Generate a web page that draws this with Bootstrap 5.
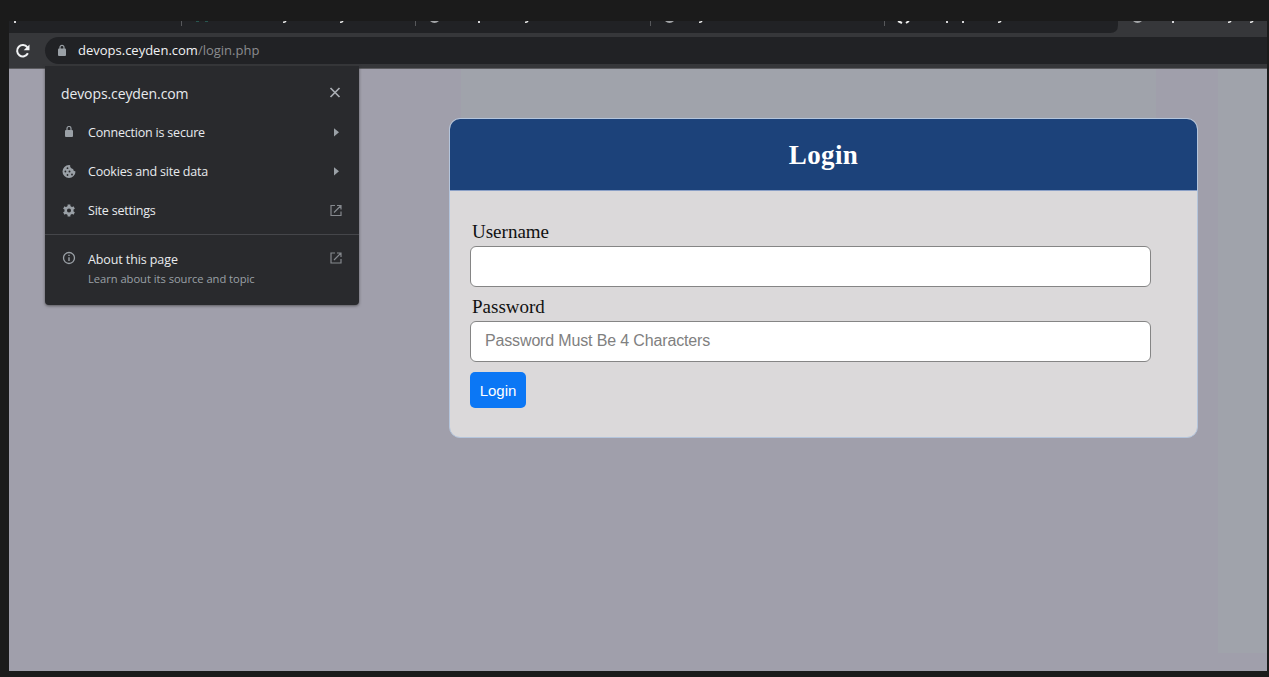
<!DOCTYPE html>
<html lang="en">
<head>
<meta charset="utf-8">
<meta name="viewport" content="width=device-width, initial-scale=1">
<title>Login</title>
<link href="https://cdn.jsdelivr.net/npm/bootstrap@5.3.0/dist/css/bootstrap.min.css" rel="stylesheet">
<style>
body{background:#1b1b1b;height:677px;padding:21px 2px 6px 9px;overflow:hidden;font-family:"Open Sans","Noto Sans",sans-serif}
.browser{height:650px;background:#a09fab}
.tabstrip{height:12px;background:#36373a}
.tabstrip svg{display:block}
.toolbar{height:36px;background:#36373a;padding:4px 0 4px 6px;border-bottom:1px solid #5c5c60}
.reload{width:16px;margin-right:14px}
.omnibox{height:27px;background:#212225;border-radius:14px 0 0 14px;padding-left:12px;font-size:13px;color:#8b8c8f}
.omnibox .url{margin-left:11px}
.omnibox b{font-weight:400;color:#f1f2f4}
.viewport{height:602px;padding:49px 0 0 440px;background:linear-gradient(#a0a3ab,#a0a3ab) 1209px 0/49px 584px no-repeat,linear-gradient(#a0a3ab,#a0a3ab) 452px 0/695px 49px no-repeat,#a09fab}
.siteinfo{left:36px;top:-3px;width:314px;height:239px;background:#292a2d;border-radius:0 0 4px 4px;box-shadow:0 1px 3px #333a;color:#e8eaed;padding-top:8px;z-index:2}
.siteinfo .line{height:39px;padding:0 16px;font-size:12.5px;letter-spacing:-.2px}
.siteinfo .line>span{padding-top:1px}
.siteinfo svg{flex:none;display:block}
.siteinfo .lead-ico{width:14px;margin-right:13px;margin-left:1px}
.siteinfo .lead-ico{margin-right:12px}
.siteinfo .site-line{padding-bottom:1px}
.site-name{font-size:14px;letter-spacing:-.1px}
.rule{height:1px;background:#45464a;margin-top:4px}
.about{padding:15px 16px 0}
.about-title{font-size:12.5px;line-height:19px;letter-spacing:-.1px}
.about-sub{font-size:11.2px;line-height:19px;color:#9aa0a6;letter-spacing:-.04px}
.login-card{width:749px;height:320px;background:#dbd9da;border:1px solid #b4c5dc;border-radius:11px;overflow:hidden}
.login-head{height:72px;background:#1c427a;border-bottom:1px solid #8ba0c6;color:#fff;font:bold 27px/72px "Liberation Serif",serif;letter-spacing:.4px}
.login-form{padding:31px 20px 0}
.login-form label{font:19px/20px "Liberation Serif",serif;color:#111;padding-left:2px;margin-bottom:4px;display:block}
.login-form .form-control{width:681px;height:42px;padding:0 14px 1px;border:1px solid #858585;border-radius:6px;font:16px "Liberation Sans",sans-serif;letter-spacing:-.15px;background:#fff;margin-bottom:10px}
.login-form .form-control{height:41px}
.login-form .form-control::placeholder{color:#808080;opacity:1}
.login-form .btn{width:56px;height:36px;padding:0;background:#0b77f5;border:0;border-radius:5px;font:15px "Liberation Sans",sans-serif;display:block}
</style>
</head>
<body>
<div class="browser d-flex flex-column">
  <div class="tabstrip">
    <svg width="1258" height="12" viewBox="0 0 1258 12" aria-hidden="true">
      <path d="M0 0H1109V4Q1109 12 1101 12H0Z" fill="#212225"/>
      <path d="M172.500 0V5M406.500 0V5M641.500 0V5M875.500 0V5" stroke="#57585b"/>
      <path d="M5 0h2v2h-2zM469 0h2v2h-2zM937 0h2v2h-2zM953 0h2v2h-2zM1163 0h2v2h-2z" fill="#d5d5d8"/>
      <path d="M274 1.300q2 0 3-1.300M331 1.300q2 0 3-1.300M516 1.300q2 0 3-1.300M690 1.300q2 0 3-1.300M989 1.300q2 0 3-1.300M1219 1.300q2 0 3-1.300M1241 1.300q2 0 3-1.300" stroke="#eee" stroke-width="1.500" fill="none"/>
      <path d="M421 0q4.500 4 9 0M656 0q4.500 4 9 0M1124 0q4.500 4 9 0" fill="#a4a6a9"/>
      <path d="M889 0l4 2M897 2l3-2" stroke="#eee" stroke-width="2"/>
      <path d="M187 .500h3M196 .500h3" stroke="#285650"/>
    </svg>
  </div>
  <div class="toolbar d-flex align-items-center">
    <svg class="reload" height="16" viewBox="0 0 16 16" fill="none" aria-hidden="true"><path d="M12.900 10.300A5.700 5.700 0 1 1 12.400 4.300" stroke="#f1f2f4" stroke-width="2"/><path d="M14.500 1.500V7.300H8.700Z" fill="#f1f2f4"/></svg>
    <div class="omnibox d-flex align-items-center flex-grow-1">
      <svg width="10" height="13" viewBox="0 0 10 13" aria-hidden="true"><rect x="1" y="4.500" width="8" height="7.500" rx="1" fill="#9aa0a6"/><path d="M3 5V3.300a2 2 0 0 1 4 0V5" fill="none" stroke="#9aa0a6" stroke-width="1.200"/></svg>
      <span class="url"><b>devops.ceyden.com</b>/login.php</span>
    </div>
  </div>
  <main class="viewport position-relative">
    <aside class="siteinfo position-absolute">
      <div class="line site-line d-flex align-items-center justify-content-between"><span class="site-name">devops.ceyden.com</span>
        <svg width="16" height="16" viewBox="0 0 16 16" aria-hidden="true"><path d="M3.500 3l9 9M12.500 3l-9 9" stroke="#a9adb2" stroke-width="1.700"/></svg></div>
      <div class="line d-flex align-items-center">
        <svg class="lead-ico" height="14" viewBox="0 1 14 14" aria-hidden="true"><rect x="3" y="5" width="8" height="7" rx="1" fill="#9aa0a6"/><path d="M5 5.500V3.500a2 2 0 0 1 4 0V5.500" fill="none" stroke="#9aa0a6" stroke-width="1.200"/></svg>
        <span class="flex-grow-1">Connection is secure</span><svg width="14" height="14" viewBox="0 1 14 14" aria-hidden="true"><path d="M5 3.200L10 7.300 5 11.400Z" fill="#9aa0a6"/></svg></div>
      <div class="line d-flex align-items-center">
        <svg class="lead-ico" height="14" viewBox="0 .5 14 14" aria-hidden="true"><path d="M7 .500a6.500 6.500 0 1 0 6.500 6.500 2.600 2.600 0 0 1-2.400-2.600A2.900 2.900 0 0 1 8.200 .800Z" fill="#9aa0a6"/><g fill="#292a2d"><circle cx="5.500" cy="3.700" r=".9"/><circle cx="3.400" cy="7" r=".9"/><circle cx="7.500" cy="7" r="1"/><circle cx="5.500" cy="10.500" r=".9"/><circle cx="10" cy="10" r=".9"/></g></svg>
        <span class="flex-grow-1">Cookies and site data</span><svg width="14" height="14" viewBox="0 1 14 14" aria-hidden="true"><path d="M5 3.200L10 7.300 5 11.400Z" fill="#9aa0a6"/></svg></div>
      <div class="line d-flex align-items-center">
        <svg class="lead-ico" height="14" viewBox="0 .5 14 14" aria-hidden="true"><circle cx="7" cy="7" r="3.300" fill="none" stroke="#9aa0a6" stroke-width="2.500"/><path d="M7 1v2.500M7 10.500V13M1.800 4L4 5.200M10 8.800L12.200 10M1.800 10L4 8.800M10 5.200L12.200 4" stroke="#9aa0a6" stroke-width="2.800"/></svg>
        <span class="flex-grow-1">Site settings</span><svg width="14" height="14" viewBox="0 .5 14 14" fill="none" stroke="#85898e" stroke-width="1.200" aria-hidden="true"><path d="M6 2H2V12H12V8M8 2H12V6M12 2L5 9"/></svg></div>
      <div class="rule"></div>
      <div class="about d-flex align-items-start">
        <svg class="lead-ico" height="16" viewBox="0 0 14 16" aria-hidden="true"><circle cx="7" cy="8" r="5.500" fill="none" stroke="#9aa0a6" stroke-width="1.300"/><path d="M7 7.300V11M7 4.700V6" stroke="#9aa0a6" stroke-width="1.400"/></svg>
        <div class="flex-grow-1"><div class="about-title">About this page</div><div class="about-sub">Learn about its source and topic</div></div>
        <svg width="14" height="16" viewBox="0 -1 14 16" fill="none" stroke="#85898e" stroke-width="1.200" aria-hidden="true"><path d="M6 2H2V12H12V8M8 2H12V6M12 2L5 9"/></svg>
      </div>
    </aside>
    <section class="login-card">
      <div class="login-head text-center">Login</div>
      <form class="login-form">
        <label for="user">Username</label>
        <input class="form-control" id="user" type="text">
        <label for="pass">Password</label>
        <input class="form-control" id="pass" type="password" placeholder="Password Must Be 4 Characters">
        <button class="btn btn-primary" type="button">Login</button>
      </form>
    </section>
  </main>
</div>
<script src="https://cdn.jsdelivr.net/npm/bootstrap@5.3.0/dist/js/bootstrap.bundle.min.js"></script>
</body>
</html>
